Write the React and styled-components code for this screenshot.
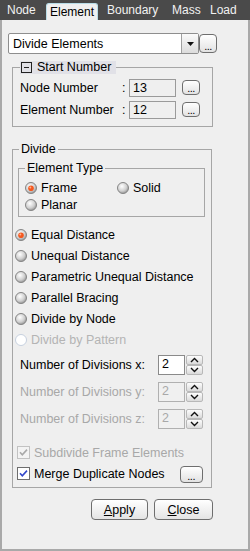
import styled, { createGlobalStyle } from 'styled-components';

const GlobalStyle = createGlobalStyle`
  html, body { margin: 0; padding: 0; background: #efefef; }
  * { box-sizing: border-box; }
`;

const TABS = [
  { label: 'Node', w: 44, pl: 5 },
  { label: 'Element', w: 52, pl: 3, active: true },
  { label: 'Boundary', w: 67, pl: 9 },
  { label: 'Mass', w: 40, pl: 7 },
  { label: 'Load', w: 45, pl: 5 },
];

const RADIOS = [
  { label: 'Equal Distance', checked: true },
  { label: 'Unequal Distance' },
  { label: 'Parametric Unequal Distance' },
  { label: 'Parallel Bracing' },
  { label: 'Divide by Node' },
  { label: 'Divide by Pattern', disabled: true },
];

const DIVISIONS = [
  { axis: 'x', value: '2' },
  { axis: 'y', value: '2', disabled: true },
  { axis: 'z', value: '2', disabled: true },
];

// Радио-кнопка в стиле старого Windows-скина
function Radio({ checked, disabled }) {
  const id = checked ? 'rs' : 'rn';
  if (disabled) {
    return (
      <svg width="12" height="12" viewBox="0 0 12 12">
        <circle cx="6" cy="6" r="5.5" fill="#fff" stroke="#c6d0de" />
      </svg>
    );
  }
  return (
    <svg width="12" height="12" viewBox="0 0 12 12">
      <defs>
        <radialGradient id={id} cx="40%" cy="35%" r="70%">
          <stop offset="0%" stopColor="#ffffff" />
          <stop offset="60%" stopColor="#d0d0d0" />
          <stop offset="100%" stopColor="#8e8e8e" />
        </radialGradient>
      </defs>
      <circle cx="6" cy="6" r="5.5" fill={`url(#${id})`} stroke="#858585" />
      {checked && <circle cx="6" cy="6.3" r="2.8" fill="#f4581f" />}
      {checked && <circle cx="5.3" cy="5.4" r="1" fill="#ffb08a" />}
    </svg>
  );
}

function Check({ disabled }) {
  return (
    <svg width="13" height="13" viewBox="0 0 13 13">
      <rect x="0.5" y="0.5" width="12" height="12" fill={disabled ? '#f3f3f3' : '#fff'} stroke={disabled ? '#c2c2c2' : '#6e6e6e'} />
      <path d="M3 6.3 L5.3 8.8 L10 3.6" fill="none" stroke={disabled ? '#a8a8a8' : '#3246c8'} strokeWidth="1.6" />
    </svg>
  );
}

function Chevron({ up }) {
  return (
    <svg width="9" height="6" viewBox="0 0 9 6">
      <path d={up ? 'M1 5 L4.5 1.5 L8 5' : 'M1 1 L4.5 4.5 L8 1'} fill="none" stroke="#111" strokeWidth="1.4" />
    </svg>
  );
}

export default function App() {
  return (
    <>
      <GlobalStyle />
      <Window>
        <TabBar>
          {TABS.map((t) => (
            <Tab key={t.label} $w={t.w} $pl={t.pl} $active={t.active}>
              {t.label}
            </Tab>
          ))}
        </TabBar>
        <Panel>
          <ComboRow>
            <Select>
              <span>Divide Elements</span>
              <SelectArrow>
                <svg width="7" height="4" viewBox="0 0 7 4">
                  <path d="M0 0 H7 L3.5 4 Z" fill="#111" />
                </svg>
              </SelectArrow>
            </Select>
            <DotsButton $w={18} $h={19}>...</DotsButton>
          </ComboRow>

          <Group $w={201} $mt={7}>
            <StartLegend>
              <MinusBox />
              Start Number
            </StartLegend>
            <GroupBody $pt={5} $pb={7} $pl={7} $gap={4}>
              <NumberRow>
                <FieldLabel>Node Number</FieldLabel>
                <Colon>:</Colon>
                <ReadField>13</ReadField>
                <DotsButton $w={18} $h={15}>...</DotsButton>
              </NumberRow>
              <NumberRow>
                <FieldLabel>Element Number</FieldLabel>
                <Colon>:</Colon>
                <ReadField>12</ReadField>
                <DotsButton $w={18} $h={15}>...</DotsButton>
              </NumberRow>
            </GroupBody>
          </Group>

          <Group $w={200} $mt={16}>
            <Legend $ml={6}>Divide</Legend>
            <GroupBody $pt={0} $pb={3} $pl={2}>
              <Group $w={187} $mt={6} $ml={3}>
                <Legend $ml={6}>Element Type</Legend>
                <TypeGrid>
                  <Option>
                    <Radio checked />
                    Frame
                  </Option>
                  <Option>
                    <Radio />
                    Solid
                  </Option>
                  <Option>
                    <Radio />
                    Planar
                  </Option>
                </TypeGrid>
              </Group>

              <RadioList>
                {RADIOS.map((r) => (
                  <Option key={r.label} $h={21} $disabled={r.disabled}>
                    <Radio checked={r.checked} disabled={r.disabled} />
                    {r.label}
                  </Option>
                ))}
              </RadioList>

              <DivisionList>
                {DIVISIONS.map((d) => (
                  <DivisionRow key={d.axis} $disabled={d.disabled}>
                    <DivisionLabel>Number of Divisions {d.axis}:</DivisionLabel>
                    <SpinField $disabled={d.disabled}>{d.value}</SpinField>
                    <Spinner>
                      <SpinButton><Chevron up /></SpinButton>
                      <SpinButton><Chevron /></SpinButton>
                    </Spinner>
                  </DivisionRow>
                ))}
              </DivisionList>

              <CheckList>
                <CheckRow $disabled>
                  <Check disabled />
                  Subdivide Frame Elements
                </CheckRow>
                <CheckRow>
                  <Check />
                  Merge Duplicate Nodes
                  <DotsButton $w={23} $h={17} $ml={11}>...</DotsButton>
                </CheckRow>
              </CheckList>
            </GroupBody>
          </Group>

          <ButtonRow>
            <PushButton $w={57}><u>A</u>pply</PushButton>
            <PushButton $w={59}><u>C</u>lose</PushButton>
          </ButtonRow>
        </Panel>
      </Window>
    </>
  );
}

const Window = styled.div`
  width: 250px;
  height: 551px;
  display: flex;
  flex-direction: column;
  font-family: "Liberation Sans", Arial, sans-serif;
  font-size: 12.5px;
  color: #000;
`;

const TabBar = styled.div`
  height: 20px;
  flex: none;
  display: flex;
  align-items: flex-end;
  padding-left: 2px;
  background: #4a4a4a;
`;

const Tab = styled.div`
  width: ${(p) => p.$w}px;
  height: ${(p) => (p.$active ? 17 : 20)}px;
  padding-left: ${(p) => p.$pl}px;
  display: flex;
  align-items: center;
  font-size: 12px;
  color: ${(p) => (p.$active ? '#000' : '#f2f2f2')};
  background: ${(p) => (p.$active ? '#f0f0f0' : 'transparent')};
  border: ${(p) => (p.$active ? '1px solid #b9dde8' : 'none')};
  border-bottom: none;
  border-radius: 3px 3px 0 0;
`;

const Panel = styled.div`
  flex: 1;
  display: flex;
  flex-direction: column;
  padding: 13px 0 0 6px;
  background: #efefef;
  border: 2px solid #a9a9a9;
  border-top: none;
`;

const ComboRow = styled.div`
  display: flex;
  align-items: flex-start;
`;

const Select = styled.div`
  width: 191px;
  height: 21px;
  display: flex;
  align-items: center;
  justify-content: space-between;
  padding-left: 4px;
  background: #fff;
  border: 1px solid #8e8e8e;
  border-radius: 2px;
`;

const SelectArrow = styled.div`
  width: 17px;
  height: 19px;
  display: flex;
  align-items: center;
  justify-content: center;
  border-left: 1px solid #a0a0a0;
  background: linear-gradient(#fafafa, #dcdcdc);
`;

const DotsButton = styled.div`
  width: ${(p) => p.$w}px;
  height: ${(p) => p.$h}px;
  margin-left: ${(p) => p.$ml || 0}px;
  margin-top: 1px;
  flex: none;
  display: flex;
  align-items: flex-end;
  justify-content: center;
  padding-bottom: 2px;
  font-size: 11px;
  line-height: 8px;
  letter-spacing: -0.5px;
  border: 1px solid #6e6e6e;
  border-radius: 4px;
  background: linear-gradient(#ffffff, #e2e2e2);
`;

const Group = styled.fieldset`
  width: ${(p) => p.$w}px;
  margin: ${(p) => p.$mt}px 0 0 ${(p) => (p.$ml ?? 4)}px;
  padding: 0;
  min-width: 0;
  border: 1px solid #a6a6a6;
`;

const Legend = styled.legend`
  margin-left: ${(p) => p.$ml}px;
  padding: 0 2px;
  line-height: 13px;
`;

const StartLegend = styled.legend`
  margin-left: 7px;
  padding: 0 5px 0 1px;
  display: flex;
  align-items: center;
  gap: 5px;
  height: 13px;
  line-height: 13px;
  white-space: nowrap;
  background: #e1e1e7;
`;

const MinusBox = styled.span`
  width: 11px;
  height: 11px;
  border: 1px solid #222;
  position: relative;
  flex: none;
  &::after {
    content: '';
    position: absolute;
    left: 2px;
    right: 2px;
    top: 4px;
    height: 1px;
    background: #222;
  }
`;

const GroupBody = styled.div`
  padding: ${(p) => p.$pt}px 0 ${(p) => p.$pb}px ${(p) => p.$pl}px;
  display: flex;
  flex-direction: column;
  gap: ${(p) => p.$gap || 0}px;
`;

const NumberRow = styled.div`
  height: 18px;
  display: flex;
  align-items: flex-start;
`;

const FieldLabel = styled.span`
  width: 102px;
  line-height: 18px;
`;

const Colon = styled.span`
  width: 7px;
  line-height: 18px;
`;

const ReadField = styled.div`
  width: 47px;
  height: 18px;
  margin-right: 6px;
  padding-left: 3px;
  line-height: 16px;
  border: 1px solid #9a9a9a;
  background: #efefef;
`;

const TypeGrid = styled.div`
  display: grid;
  grid-template-columns: 92px 1fr;
  padding: 4px 0 3px 6px;
`;

const Option = styled.div`
  height: ${(p) => p.$h || 17}px;
  display: flex;
  align-items: center;
  gap: 4px;
  color: ${(p) => (p.$disabled ? '#b4b4b4' : '#000')};
`;

const RadioList = styled.div`
  margin-top: 7px;
  display: flex;
  flex-direction: column;
`;

const DivisionList = styled.div`
  margin-top: 5px;
  padding-left: 5px;
  display: flex;
  flex-direction: column;
  gap: 7px;
`;

const DivisionRow = styled.div`
  height: 20px;
  display: flex;
  align-items: center;
  color: ${(p) => (p.$disabled ? '#a8a8a8' : '#000')};
`;

const DivisionLabel = styled.span`
  width: 138px;
`;

const SpinField = styled.div`
  width: 27px;
  height: 20px;
  padding-left: 3px;
  line-height: 17px;
  border: 1px solid ${(p) => (p.$disabled ? '#b0b0b0' : '#8a8a8a')};
  background: ${(p) => (p.$disabled ? '#f0f0f0' : '#fff')};
`;

const Spinner = styled.div`
  width: 17px;
  height: 20px;
  margin-left: 1px;
  display: flex;
  flex-direction: column;
`;

const SpinButton = styled.div`
  flex: 1;
  display: flex;
  align-items: center;
  justify-content: center;
  border: 1px solid #b8b8b8;
  border-radius: 2px;
  background: linear-gradient(#fdfdfd, #dadada);
`;

const CheckList = styled.div`
  margin-top: 13px;
  padding-left: 2px;
  display: flex;
  flex-direction: column;
`;

const CheckRow = styled.div`
  height: 21px;
  display: flex;
  align-items: center;
  gap: 4px;
  color: ${(p) => (p.$disabled ? '#a8a8a8' : '#000')};
`;

const ButtonRow = styled.div`
  width: 201px;
  margin: 11px 0 0 4px;
  display: flex;
  justify-content: flex-end;
  gap: 6px;
`;

const PushButton = styled.div`
  width: ${(p) => p.$w}px;
  height: 21px;
  display: flex;
  align-items: center;
  justify-content: center;
  border: 1px solid #6e6e6e;
  border-radius: 4px;
  background: linear-gradient(#ffffff, #e4e4e4);
  u { text-decoration: underline; }
`;
